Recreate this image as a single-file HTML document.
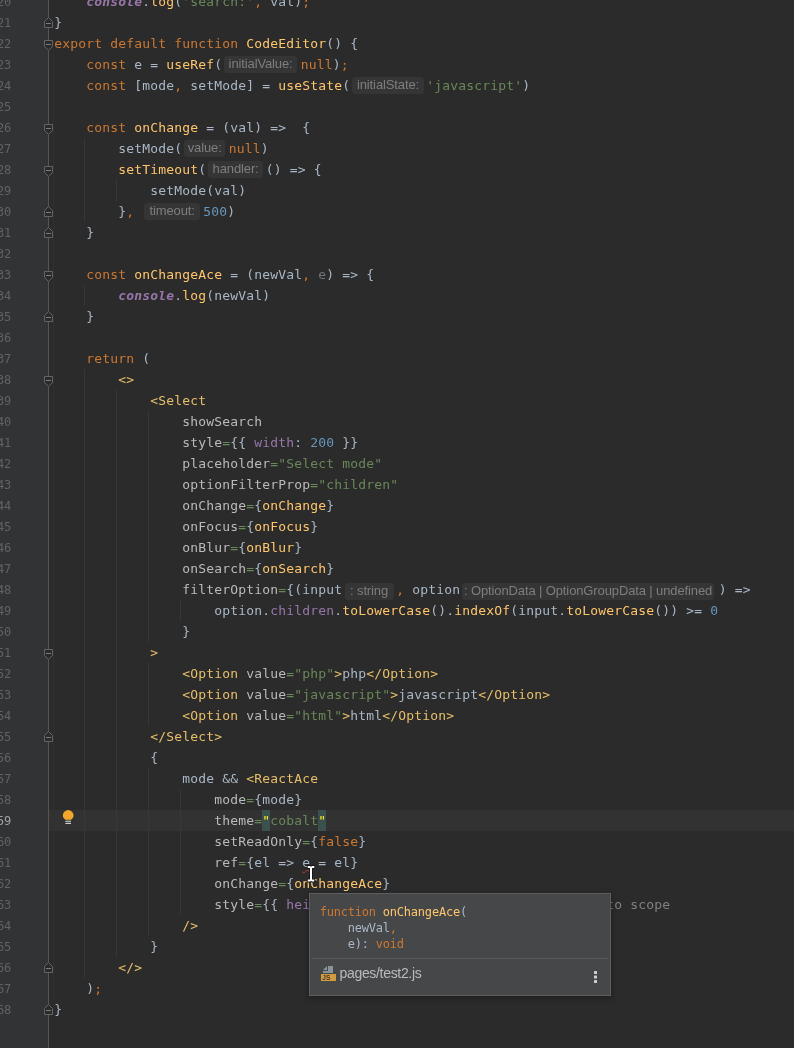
<!DOCTYPE html>
<html><head><meta charset="utf-8"><title>CodeEditor</title>
<style>
html,body{margin:0;padding:0}
body{width:794px;height:1048px;overflow:hidden;background:#2b2b2b;position:relative;font-family:"DejaVu Sans Mono","Liberation Mono",monospace}
#root{position:absolute;left:0;top:0;width:794px;height:1048px;will-change:transform}
#gut{position:absolute;left:0;top:0;width:48px;height:1048px;background:#313335}
#gl{position:absolute;left:48px;top:0;width:1px;height:1048px;background:#555}
.ln{position:absolute;left:-30px;width:41px;text-align:right;height:21px;line-height:21px;font-size:12px;color:#606366;letter-spacing:-0.22px}
.ln.cur{color:#a4a3a3}
#cur{position:absolute;left:49px;top:810px;width:745px;height:21px;background:#323232}
.l{position:absolute;left:54.2px;height:21px;line-height:21px;font-size:13px;letter-spacing:0.174px;color:#a9b7c6;white-space:pre}
.k{color:#cc7832}.f{color:#ffc66d}.s{color:#6a8759}.n{color:#6897bb}.p{color:#9876aa}
.g{color:#9876aa;font-weight:bold;font-style:italic}
.t{color:#e8bf6a}.a{color:#bababa}.u{color:#72737a}.c{color:#808080}
.sq{color:#ffef28;background:#3b514d;padding:3px 0 2.9px}
.w{text-decoration:underline wavy #bc3f3c;text-decoration-thickness:1px;text-underline-offset:1.5px}
.h{display:inline-block;box-sizing:border-box;height:17px;line-height:15px;vertical-align:top;margin-top:1.75px;letter-spacing:-0.12px;background:#353536;border-radius:3px;color:#7e7e7e;font-family:"Liberation Sans",sans-serif;font-size:13px;text-align:center;overflow:hidden;white-space:pre}
.h2{margin-top:3.75px}
.ig{position:absolute;width:1px;background:#373737}
#pop{position:absolute;left:309px;top:893px;width:302px;height:103px;box-sizing:border-box;background:#464749;border:1px solid #5c5d5f;box-shadow:0 2px 6px rgba(0,0,0,.35)}
.pc{position:absolute;left:9.8px;top:10.2px;font-size:12px;letter-spacing:-0.22px;line-height:16px;white-space:pre;color:#a9b7c6}
.sep{position:absolute;left:2px;right:2px;top:64px;height:1px;background:#58595b}
.pf{position:absolute;left:0;right:0;top:65px;height:36px}
.js{position:absolute;left:10px;top:6px}
.pt{position:absolute;left:29.5px;top:6px;font-family:"Liberation Sans",sans-serif;font-size:14px;letter-spacing:-0.32px;line-height:16px;color:#bbbbbb}
.dots{position:absolute;left:283px;top:11px}
</style></head><body>
<div id="gut"></div><div id="gl"></div><div id="cur"></div>
<div id="root">
<div class="ln" style="top:-8.5px">20</div><div class="ln" style="top:12.5px">21</div><div class="ln" style="top:33.5px">22</div><div class="ln" style="top:54.5px">23</div><div class="ln" style="top:75.5px">24</div><div class="ln" style="top:96.5px">25</div><div class="ln" style="top:117.5px">26</div><div class="ln" style="top:138.5px">27</div><div class="ln" style="top:159.5px">28</div><div class="ln" style="top:180.5px">29</div><div class="ln" style="top:201.5px">30</div><div class="ln" style="top:222.5px">31</div><div class="ln" style="top:243.5px">32</div><div class="ln" style="top:264.5px">33</div><div class="ln" style="top:285.5px">34</div><div class="ln" style="top:306.5px">35</div><div class="ln" style="top:327.5px">36</div><div class="ln" style="top:348.5px">37</div><div class="ln" style="top:369.5px">38</div><div class="ln" style="top:390.5px">39</div><div class="ln" style="top:411.5px">40</div><div class="ln" style="top:432.5px">41</div><div class="ln" style="top:453.5px">42</div><div class="ln" style="top:474.5px">43</div><div class="ln" style="top:495.5px">44</div><div class="ln" style="top:516.5px">45</div><div class="ln" style="top:537.5px">46</div><div class="ln" style="top:558.5px">47</div><div class="ln" style="top:579.5px">48</div><div class="ln" style="top:600.5px">49</div><div class="ln" style="top:621.5px">50</div><div class="ln" style="top:642.5px">51</div><div class="ln" style="top:663.5px">52</div><div class="ln" style="top:684.5px">53</div><div class="ln" style="top:705.5px">54</div><div class="ln" style="top:726.5px">55</div><div class="ln" style="top:747.5px">56</div><div class="ln" style="top:768.5px">57</div><div class="ln" style="top:789.5px">58</div><div class="ln cur" style="top:810.5px">59</div><div class="ln" style="top:831.5px">60</div><div class="ln" style="top:852.5px">61</div><div class="ln" style="top:873.5px">62</div><div class="ln" style="top:894.5px">63</div><div class="ln" style="top:915.5px">64</div><div class="ln" style="top:936.5px">65</div><div class="ln" style="top:957.5px">66</div><div class="ln" style="top:978.5px">67</div><div class="ln" style="top:999.5px">68</div>
<div class="l" style="top:-8.75px">    <span class="g">console</span>.<span class="f">log</span>(<span class="s">&#x27;search:&#x27;</span><span class="k">,</span> val)<span class="k">;</span></div>
<div class="l" style="top:12.25px">}</div>
<div class="l" style="top:33.25px"><span class="k">export default function </span><span class="f">CodeEditor</span>() {</div>
<div class="l" style="top:54.25px">    <span class="k">const </span>e = <span class="f">useRef</span>(<span class="h" style="width:72.3px;margin-left:2.2px;margin-right:4.0px">initialValue:</span><span class="k">null</span>)<span class="k">;</span></div>
<div class="l" style="top:75.25px">    <span class="k">const </span>[mode<span class="k">,</span> setMode] = <span class="f">useState</span>(<span class="h" style="width:71.8px;margin-left:1.8px;margin-right:2.4px">initialState:</span><span class="s">&#x27;javascript&#x27;</span>)</div>
<div class="l" style="top:117.25px">    <span class="k">const </span><span class="f">onChange</span> = (val) =&gt;  {</div>
<div class="l" style="top:138.25px">        setMode(<span class="h" style="width:41.599999999999994px;margin-left:1.7px;margin-right:3.2px">value:</span><span class="k">null</span>)</div>
<div class="l" style="top:159.25px">        <span class="f">setTimeout</span>(<span class="h" style="width:54.7px;margin-left:2.0px;margin-right:2.8px">handler:</span>() =&gt; {</div>
<div class="l" style="top:180.25px">            setMode(val)</div>
<div class="l" style="top:201.25px">        }<span class="k">,</span> <span class="h" style="width:56.4px;margin-left:1.7px;margin-right:2.9px">timeout:</span><span class="n">500</span>)</div>
<div class="l" style="top:222.25px">    }</div>
<div class="l" style="top:264.25px">    <span class="k">const </span><span class="f">onChangeAce</span> = (newVal<span class="k">,</span> <span class="u">e</span>) =&gt; {</div>
<div class="l" style="top:285.25px">        <span class="g">console</span>.<span class="f">log</span>(newVal)</div>
<div class="l" style="top:306.25px">    }</div>
<div class="l" style="top:348.25px">    <span class="k">return </span>(</div>
<div class="l" style="top:369.25px">        <span class="t">&lt;&gt;</span></div>
<div class="l" style="top:390.25px">            <span class="t">&lt;Select</span></div>
<div class="l" style="top:411.25px">                <span class="a">showSearch</span></div>
<div class="l" style="top:432.25px">                <span class="a">style</span><span class="s">=</span>{{ <span class="p">width</span>: <span class="n">200</span> }}</div>
<div class="l" style="top:453.25px">                <span class="a">placeholder</span><span class="s">=&quot;Select mode&quot;</span></div>
<div class="l" style="top:474.25px">                <span class="a">optionFilterProp</span><span class="s">=&quot;children&quot;</span></div>
<div class="l" style="top:495.25px">                <span class="a">onChange</span><span class="s">=</span>{<span class="f">onChange</span>}</div>
<div class="l" style="top:516.25px">                <span class="a">onFocus</span><span class="s">=</span>{<span class="f">onFocus</span>}</div>
<div class="l" style="top:537.25px">                <span class="a">onBlur</span><span class="s">=</span>{<span class="f">onBlur</span>}</div>
<div class="l" style="top:558.25px">                <span class="a">onSearch</span><span class="s">=</span>{<span class="f">onSearch</span>}</div>
<div class="l" style="top:579.25px">                <span class="a">filterOption</span><span class="s">=</span>{(input<span class="h h2" style="width:49.0px;margin-left:2.3px;margin-right:2.7px">: string</span><span class="k">,</span> option<span class="h h2" style="width:252.0px;margin-left:1.8px;margin-right:4.7px">: OptionData | OptionGroupData | undefined</span>) =&gt;</div>
<div class="l" style="top:600.25px">                    option.<span class="p">children</span>.<span class="f">toLowerCase</span>().<span class="f">indexOf</span>(input.<span class="f">toLowerCase</span>()) &gt;= <span class="n">0</span></div>
<div class="l" style="top:621.25px">                }</div>
<div class="l" style="top:642.25px">            <span class="t">&gt;</span></div>
<div class="l" style="top:663.25px">                <span class="t">&lt;Option </span><span class="a">value</span><span class="s">=&quot;php&quot;</span><span class="t">&gt;</span>php<span class="t">&lt;/Option&gt;</span></div>
<div class="l" style="top:684.25px">                <span class="t">&lt;Option </span><span class="a">value</span><span class="s">=&quot;javascript&quot;</span><span class="t">&gt;</span>javascript<span class="t">&lt;/Option&gt;</span></div>
<div class="l" style="top:705.25px">                <span class="t">&lt;Option </span><span class="a">value</span><span class="s">=&quot;html&quot;</span><span class="t">&gt;</span>html<span class="t">&lt;/Option&gt;</span></div>
<div class="l" style="top:726.25px">            <span class="t">&lt;/Select&gt;</span></div>
<div class="l" style="top:747.25px">            {</div>
<div class="l" style="top:768.25px">                mode &amp;&amp; <span class="t">&lt;ReactAce</span></div>
<div class="l" style="top:789.25px">                    <span class="a">mode</span><span class="s">=</span>{mode}</div>
<div class="l" style="top:810.25px">                    <span class="a">theme</span><span class="s">=</span><span class="sq">&quot;</span><span class="s">cobalt</span><span class="sq">&quot;</span></div>
<div class="l" style="top:831.25px">                    <span class="a">setReadOnly</span><span class="s">=</span>{<span class="k">false</span>}</div>
<div class="l" style="top:852.25px">                    <span class="a">ref</span><span class="s">=</span>{el =&gt; <span class="w">e</span> = el}</div>
<div class="l" style="top:873.25px">                    <span class="a">onChange</span><span class="s">=</span>{<span class="f">onChangeAce</span>}</div>
<div class="l" style="top:894.25px">                    <span class="a">style</span><span class="s">=</span>{{ <span class="p">height</span>: <span class="s">&#x27;calc(100vh - 100px)&#x27;</span> }} <span class="c">// add to scope</span></div>
<div class="l" style="top:915.25px">                <span class="t">/&gt;</span></div>
<div class="l" style="top:936.25px">            }</div>
<div class="l" style="top:957.25px">        <span class="t">&lt;/&gt;</span></div>
<div class="l" style="top:978.25px">    )<span class="k">;</span></div>
<div class="l" style="top:999.25px">}</div>
<div class="ig" style="left:53px;top:54px;height:945px;background:#303030"></div><div class="ig" style="left:84px;top:138px;height:84px"></div><div class="ig" style="left:84px;top:285px;height:21px"></div><div class="ig" style="left:84px;top:369px;height:609px"></div><div class="ig" style="left:116px;top:180px;height:21px"></div><div class="ig" style="left:116px;top:390px;height:567px"></div><div class="ig" style="left:148px;top:411px;height:231px"></div><div class="ig" style="left:148px;top:663px;height:63px"></div><div class="ig" style="left:148px;top:768px;height:168px"></div><div class="ig" style="left:180px;top:600px;height:21px"></div><div class="ig" style="left:180px;top:789px;height:126px"></div>
<svg id="fm" width="20" height="1048" viewBox="0 0 20 1048" style="position:absolute;left:38px;top:0" fill="#2b2b2b" stroke="#646464" stroke-width="1"><path d="M10.5,17.5L14.5,21.5V27.5H6.5V21.5Z"/><path d="M8,23.5H13" stroke="#7c7c7c"/><path d="M6.5,40.5H14.5V46.5L10.5,50.5L6.5,46.5Z"/><path d="M8,44.5H13" stroke="#7c7c7c"/><path d="M6.5,124.5H14.5V130.5L10.5,134.5L6.5,130.5Z"/><path d="M8,128.5H13" stroke="#7c7c7c"/><path d="M6.5,166.5H14.5V172.5L10.5,176.5L6.5,172.5Z"/><path d="M8,170.5H13" stroke="#7c7c7c"/><path d="M10.5,206.5L14.5,210.5V216.5H6.5V210.5Z"/><path d="M8,212.5H13" stroke="#7c7c7c"/><path d="M10.5,227.5L14.5,231.5V237.5H6.5V231.5Z"/><path d="M8,233.5H13" stroke="#7c7c7c"/><path d="M6.5,271.5H14.5V277.5L10.5,281.5L6.5,277.5Z"/><path d="M8,275.5H13" stroke="#7c7c7c"/><path d="M10.5,311.5L14.5,315.5V321.5H6.5V315.5Z"/><path d="M8,317.5H13" stroke="#7c7c7c"/><path d="M6.5,376.5H14.5V382.5L10.5,386.5L6.5,382.5Z"/><path d="M8,380.5H13" stroke="#7c7c7c"/><path d="M6.5,649.5H14.5V655.5L10.5,659.5L6.5,655.5Z"/><path d="M8,653.5H13" stroke="#7c7c7c"/><path d="M10.5,731.5L14.5,735.5V741.5H6.5V735.5Z"/><path d="M8,737.5H13" stroke="#7c7c7c"/><path d="M10.5,962.5L14.5,966.5V972.5H6.5V966.5Z"/><path d="M8,968.5H13" stroke="#7c7c7c"/><path d="M10.5,1004.5L14.5,1008.5V1014.5H6.5V1008.5Z"/><path d="M8,1010.5H13" stroke="#7c7c7c"/></svg>
<svg width="14" height="17" viewBox="0 0 14 17" style="position:absolute;left:62px;top:809px"><path d="M6.2,1.1a5.4,5.4 0 0 1 5.4,5.4c0,2-1.3,3-2.4,4.3h-6c-1.1-1.3-2.4-2.3-2.4-4.3a5.4,5.4 0 0 1 5.4-5.4z" fill="#f2a62d"/><rect x="3.4" y="11.7" width="5.6" height="1.1" fill="#d0d0d0"/><rect x="3.4" y="13.8" width="5.6" height="1.2" fill="#d0d0d0"/></svg>
<svg width="12" height="20" viewBox="0 0 12 20" style="position:absolute;left:305px;top:863.5px"><path d="M2.7,2H5L6,2.7L7,2H9.3V4H7V15.6H9.3V17.6H7L6,16.9L5,17.6H2.7V15.6H5V4H2.7Z" fill="#ffffff" stroke="#161616" stroke-width="1.8" stroke-linejoin="round" paint-order="stroke"/></svg>
<div id="pop"><div class="pc"><span class="k">function </span><span class="f">onChangeAce</span>(
    newVal<span class="k">,</span>
    e): <span class="k">void</span></div><div class="sep"></div><div class="pf"><svg class="js" width="16" height="16" viewBox="0 0 16 16"><polygon fill="#F4AF3D" fill-opacity=".8" points="1 16 16 16 16 9 1 9"/><polygon fill="#9AA7B0" fill-opacity=".8" points="7 1 3 5 7 5"/><polygon fill="#9AA7B0" fill-opacity=".8" points="8 1 8 6 3 6 3 8 13 8 13 1"/><text x="2.3" y="15" font-family="Liberation Sans,sans-serif" font-size="6.6" font-weight="bold" fill="#231f20" fill-opacity=".8">JS</text></svg><span class="pt">pages/test2.js</span><svg class="dots" width="5" height="14" viewBox="0 0 5 14"><g fill="#cfcfcf"><rect x="1" y="1" width="3" height="3" rx=".5"/><rect x="1" y="5.5" width="3" height="3" rx=".5"/><rect x="1" y="10" width="3" height="3" rx=".5"/></g></svg></div></div>
</div>
</body></html>
